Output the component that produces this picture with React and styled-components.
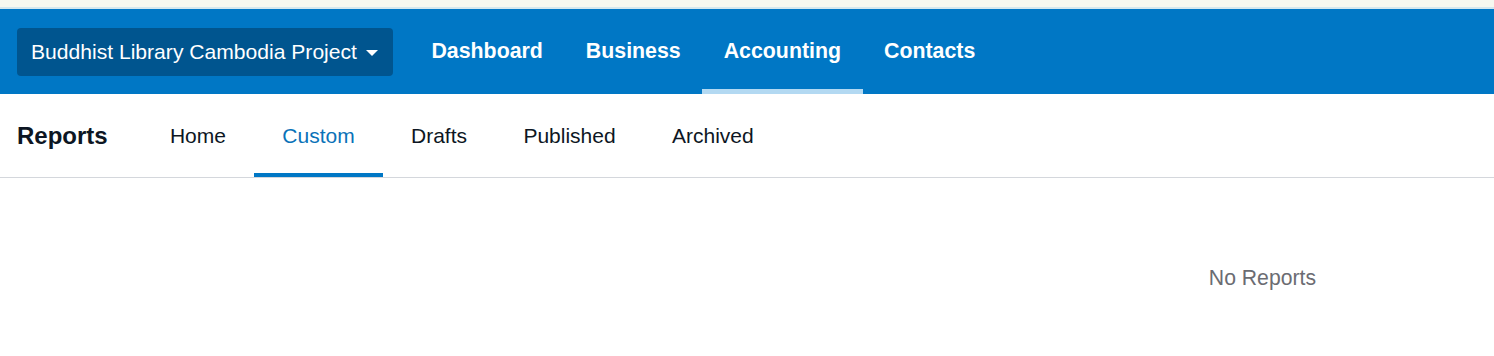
import React from "react";
import styled, { createGlobalStyle } from "styled-components";

const Global = createGlobalStyle`
  html, body { margin: 0; padding: 0; background: #ffffff; }
  body { font-family: "Liberation Sans", Arial, sans-serif; }
`;

const TopStrip = styled.div`
  height: 7px;
  background: #f6f8f0;
  border-bottom: 2px solid #d3e7ee;
`;

const Header = styled.header`
  height: 85px;
  background: #0077c5;
  display: flex;
  align-items: stretch;
  padding-left: 17px;
`;

const CompanyButton = styled.button`
  align-self: center;
  margin-top: 1px;
  height: 48px;
  display: flex;
  align-items: center;
  gap: 9px;
  padding: 0 15px 0 14px;
  background: #00558f;
  color: #ffffff;
  border: none;
  border-radius: 4px;
  font-family: inherit;
  font-size: 21.1px;
  cursor: pointer;
`;

const Caret = styled.span`
  width: 0;
  height: 0;
  border-left: 6px solid transparent;
  border-right: 6px solid transparent;
  border-top: 6px solid #ffffff;
  margin-top: 2px;
`;

const MainNav = styled.nav`
  display: flex;
  margin-left: 17px;
`;

const MainNavItem = styled.a`
  display: flex;
  align-items: center;
  padding: 5px 21.5px 0;
  color: #ffffff;
  font-weight: bold;
  font-size: 21.33px;
  text-decoration: none;
  border-bottom: 5px solid ${(p) => (p.$active ? "#b3d9f2" : "transparent")};
`;

const SubBar = styled.div`
  height: 83px;
  display: flex;
  align-items: stretch;
  padding-left: 17px;
  border-bottom: 1px solid #d4d7dc;
`;

const SubTitle = styled.h1`
  margin: 0 34px 0 0;
  display: flex;
  align-items: center;
  font-size: 24px;
  font-weight: bold;
  color: #0d1623;
  padding-top: 1px;
`;

const Tab = styled.a`
  display: flex;
  align-items: center;
  padding: 5px 28.2px 0;
  font-size: 21px;
  color: ${(p) => (p.$active ? "#0a72b8" : "#0d1623")};
  text-decoration: none;
  border-bottom: 4px solid ${(p) => (p.$active ? "#0077c5" : "transparent")};
`;

const Content = styled.main`
  display: flex;
  justify-content: flex-end;
  padding: 88px 178px 0 0;
`;

const Empty = styled.p`
  margin: 0;
  font-size: 21.2px;
  line-height: 24px;
  color: #6b6c72;
`;

export default function App() {
  const nav = ["Dashboard", "Business", "Accounting", "Contacts"];
  const tabs = ["Home", "Custom", "Drafts", "Published", "Archived"];
  return (
    <>
      <Global />
      <TopStrip />
      <Header>
        <CompanyButton>
          Buddhist Library Cambodia Project
          <Caret />
        </CompanyButton>
        <MainNav>
          {nav.map((n) => (
            <MainNavItem key={n} $active={n === "Accounting"}>
              {n}
            </MainNavItem>
          ))}
        </MainNav>
      </Header>
      <SubBar>
        <SubTitle>Reports</SubTitle>
        {tabs.map((t) => (
          <Tab key={t} $active={t === "Custom"}>
            {t}
          </Tab>
        ))}
      </SubBar>
      <Content>
        <Empty>No Reports</Empty>
      </Content>
    </>
  );
}
